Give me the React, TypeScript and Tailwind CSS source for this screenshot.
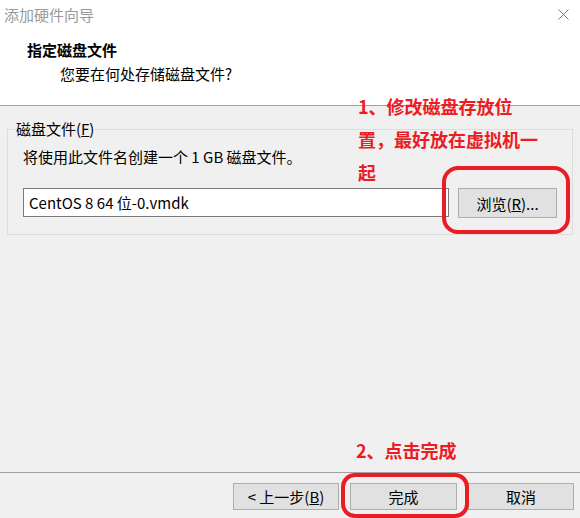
import React from "react";

const font = { fontFamily: '"Microsoft YaHei UI", "Noto Sans CJK SC", "Noto Sans", sans-serif' };

function Btn({ children, w }: { children: React.ReactNode; w: string }) {
  return (
    <div
      className={`${w} h-[27px] bg-[#e1e1e1] border border-[#adadad] flex items-center justify-center text-[15px] leading-none text-black`}
    >
      {children}
    </div>
  );
}

export default function App() {
  return (
    <div
      className="relative w-[580px] h-[518px] bg-[#f0f0f0] flex flex-col overflow-hidden text-black"
      style={font}
    >
      {/* Header */}
      <div className="h-[106px] bg-white border-b border-[#a0a0a0] flex flex-col shrink-0">
        <div className="h-[30px] flex items-center justify-between pl-[4px] pr-[11px]">
          <span className="text-[15px] leading-[20px] text-[#9a9a9a]">添加硬件向导</span>
          <svg width="11" height="11" viewBox="0 0 11 11" className="mt-[-2px]">
            <path d="M0.5 0.5 L10.5 10.5 M10.5 0.5 L0.5 10.5" stroke="#7a7a7a" strokeWidth="1" fill="none" />
          </svg>
        </div>
        <div className="mt-[10px] pl-[27px] text-[15px] leading-[20px] font-bold">指定磁盘文件</div>
        <div className="mt-[4px] pl-[60px] text-[15px] leading-[20px]">您要在何处存储磁盘文件?</div>
      </div>

      {/* Body */}
      <div className="flex-1 pt-[23px]">
        <div className="relative mx-[7px] border border-[#dcdcdc] pt-[17px] px-[15px] pb-[16px]">
          <span className="absolute left-[7px] top-[-11px] bg-[#f0f0f0] px-px text-[15px] leading-[20px]">
            磁盘文件(<span className="underline">F</span>)
          </span>
          <div className="text-[15px] leading-[20px]">将使用此文件名创建一个 1 GB 磁盘文件。</div>
          <div className="mt-[21px] flex items-start gap-[9px]">
            <div className="flex-1 h-[29px] bg-white border border-[#7a7a7a] flex items-center pl-[5px] text-[15px] leading-none">
              CentOS 8 64 位-0.vmdk
            </div>
            <div className="w-[99px] h-[30px] bg-[#e1e1e1] border border-[#adadad] flex items-center justify-center text-[15px] leading-none">
              浏览(<span className="underline">R</span>)...
            </div>
          </div>
        </div>
      </div>

      {/* Footer */}
      <div className="shrink-0 border-t border-[#a0a0a0] pt-[10px] pb-[8px] pr-[6px] flex justify-end gap-[11px]">
        <Btn w="w-[106px]">
          &lt; 上一步(<span className="underline">B</span>)
        </Btn>
        <Btn w="w-[107px]">完成</Btn>
        <Btn w="w-[106px]">取消</Btn>
      </div>

      {/* Annotations */}
      <div className="absolute left-[358px] top-[90px] text-[18px] leading-[33px] font-bold text-[#ec1c24]">
        <div>1、修改磁盘存放位</div>
        <div>置，最好放在虚拟机一</div>
        <div>起</div>
      </div>
      <div className="absolute left-[442px] top-[166px] w-[128px] h-[68px] border-[4px] border-[#ec1c24] rounded-[16px]" />

      <div className="absolute left-[356px] top-[438px] text-[18px] leading-[24px] font-bold text-[#ec1c24]">
        2、点击完成
      </div>
      <div className="absolute left-[341px] top-[473px] w-[128px] h-[45px] border-[4px] border-[#ec1c24] rounded-[14px]" />
    </div>
  );
}
